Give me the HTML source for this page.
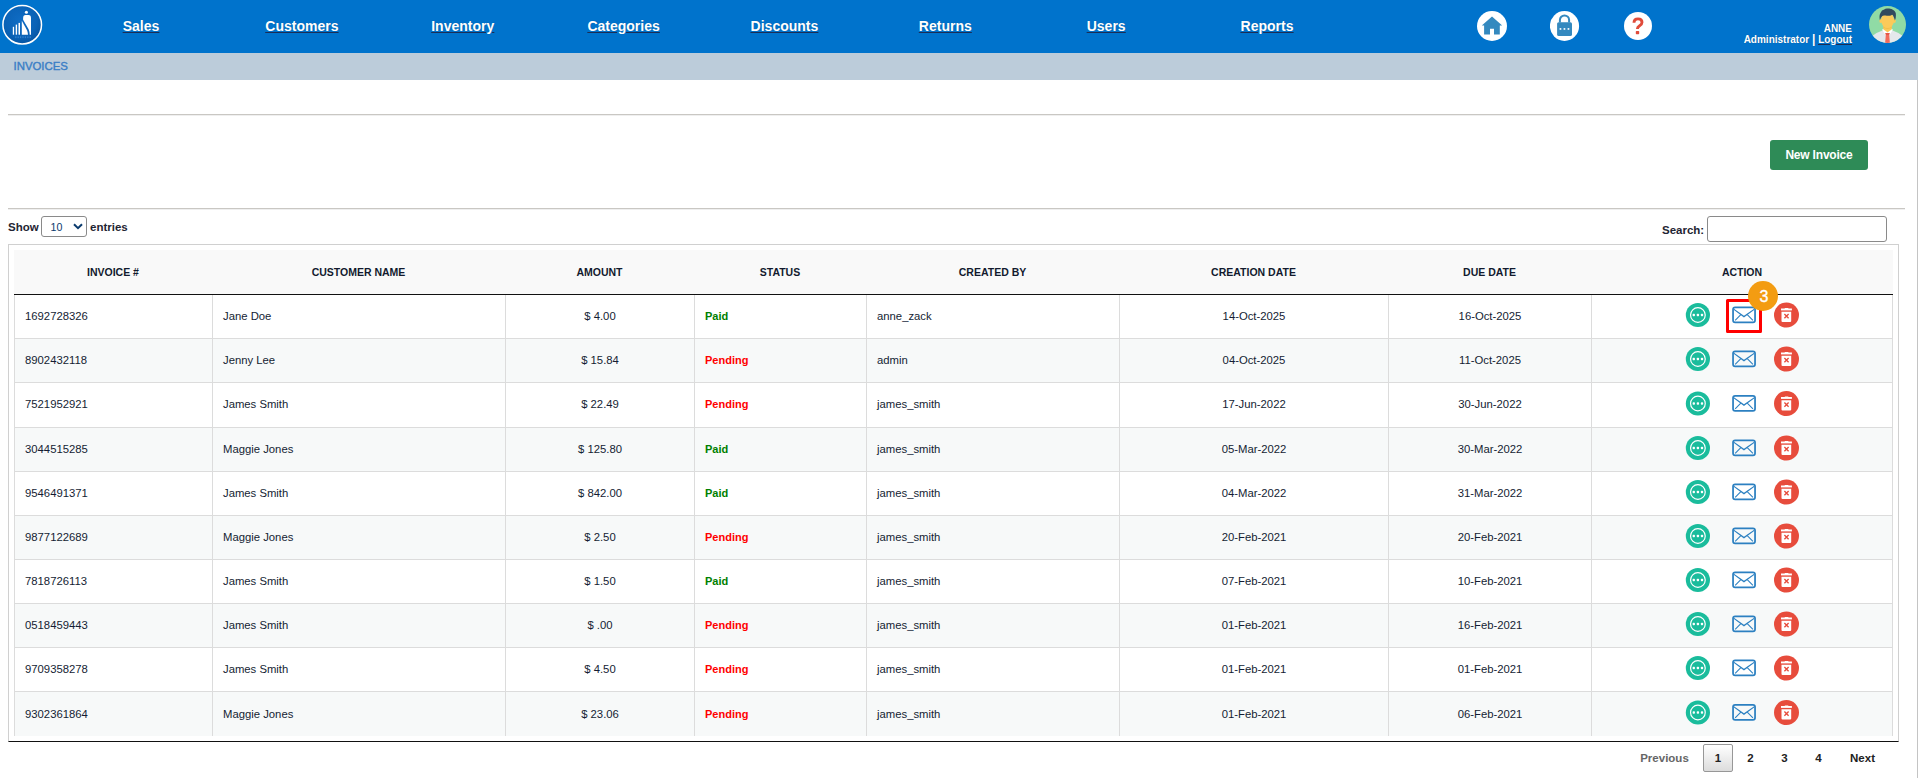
<!DOCTYPE html>
<html><head><meta charset="utf-8">
<style>
*{box-sizing:border-box}
html,body{margin:0;padding:0;background:#fff;width:1918px;height:778px;overflow:hidden;font-family:"Liberation Sans",sans-serif}
.abs{position:absolute}
#nav{position:absolute;left:0;top:0;width:1918px;height:53px;background:#0073CC}
.nv{position:absolute;top:0;height:53px;text-align:center;line-height:53px;color:#fff;font-weight:bold;font-size:14px}
.nv span{text-decoration:underline;text-decoration-color:#1b2d55;text-shadow:0 0 1px rgba(0,0,0,.25)}
#crumb{position:absolute;left:0;top:53px;width:1918px;height:27px;background:#BCCCDA}
#crumb span{position:absolute;left:13.5px;top:6px;font-size:11.4px;line-height:14px;color:#3a7ec6;-webkit-text-stroke:0.4px #3a7ec6;letter-spacing:0px}
.hr{position:absolute;margin:0;left:8px;width:1897px;height:2px;border:0;border-top:1px solid #c9c7c3;border-bottom:1px solid #efefef}
#vline{position:absolute;left:1917px;top:80px;width:1px;height:698px;background:#c4c4c4}
.btn{position:absolute;left:1770px;top:140px;width:98px;height:30px;background:#2E8B57;border-radius:3px;color:#fff;font-weight:bold;font-size:12px;line-height:30px;text-align:center;letter-spacing:-0.2px}
.lbl{position:absolute;font-weight:bold;font-size:11.5px;color:#1f2533;line-height:14px}
#sel{position:absolute;left:41px;top:216px;width:46px;height:21px;border:1px solid #8a8a8a;border-radius:3px;background:#fff}
#srch{position:absolute;left:1707px;top:216px;width:180px;height:26px;border:1px solid #8a8a8a;border-radius:3px;background:#fff}
#wrap{position:absolute;left:8px;top:244px;width:1891px;height:498px;border:1px solid #d0d0d0;border-bottom:1px solid #111}
table{position:absolute;left:14px;top:250px;border-collapse:separate;border-spacing:0;table-layout:fixed;width:1879px}
th{height:45px;background:#f9f9f9;font-size:10.5px;font-weight:bold;color:#121a2e;text-align:center;padding:0 0 1px 0;border-bottom:1px solid #111}
td{font-size:11.3px;color:#141d33;padding:0 10px 2px 10px;border-left:1px solid #dcdcdc;border-top:1px solid #dcdcdc;white-space:nowrap}
tbody tr:first-child td{border-top:0}
td:last-child{border-right:1px solid #dcdcdc}
tr.e td{background:#f7f9f9}
td.c{text-align:center}
.paid{color:#008000;font-weight:bold;font-size:11px}
.pend{color:#ff0000;font-weight:bold;font-size:11px}
.ai{display:inline-block;vertical-align:middle}
.pg{position:absolute;top:744.5px;font-size:11.5px;font-weight:bold;color:#222;line-height:27px;height:27px;text-align:center}
.pg.cur{top:744px;height:27.5px;border:1px solid #979797;border-radius:2px;background:linear-gradient(#fff,#dcdcdc);line-height:26.5px}
.badge{position:absolute;left:1748px;top:281px;width:30px;height:30px;border-radius:50%;background:#f39c12;color:#fff;font-size:16px;font-weight:normal;-webkit-text-stroke:0.35px #fff;text-align:center;line-height:32px;padding-left:2px}
.hl{position:absolute;left:1725.5px;top:298.6px;width:36.4px;height:34px;border:3px solid #ff0000;border-radius:1.5px}
tbody tr:last-child td{padding-bottom:0}

</style></head><body>
<div id="nav">
<div class="nv" style="left:60.60px;width:160.86px"><span>Sales</span></div><div class="nv" style="left:221.46px;width:160.86px"><span>Customers</span></div><div class="nv" style="left:382.32px;width:160.86px"><span>Inventory</span></div><div class="nv" style="left:543.18px;width:160.86px"><span>Categories</span></div><div class="nv" style="left:704.04px;width:160.86px"><span>Discounts</span></div><div class="nv" style="left:864.90px;width:160.86px"><span>Returns</span></div><div class="nv" style="left:1025.76px;width:160.86px"><span>Users</span></div><div class="nv" style="left:1186.62px;width:160.86px"><span>Reports</span></div>
</div>
<svg class="abs" style="left:0;top:0" width="46" height="50" viewBox="0 0 46 50">
<defs><radialGradient id="lg" cx="45%" cy="40%" r="60%"><stop offset="0" stop-color="#0f6cc4"/><stop offset="0.7" stop-color="#0a62b6"/><stop offset="1" stop-color="#0656a4"/></radialGradient></defs>
<circle cx="22.2" cy="24.7" r="19.3" fill="url(#lg)" stroke="#fff" stroke-width="1.5"/>
<circle cx="26.4" cy="12.2" r="1.55" fill="#fff"/>
<path d="M23.1 18.2 Q23.1 15 25.6 15 L28.5 15 Q31 15 31 18.2 L31 34.7 L29.7 34.7 Q29.6 31.5 28.6 29.2 L23.1 19.8 Z" fill="#fff"/>
<path d="M21.8 20.8 L26.9 29.9 Q27.9 32 28 34.7 L21.8 34.7 Z" fill="#fff"/>
<rect x="12.8" y="26.8" width="1.3" height="7.9" fill="#fff"/>
<rect x="15.7" y="24.6" width="1.4" height="10.1" fill="#fff"/>
<rect x="18.5" y="22.9" width="1.5" height="11.8" fill="#fff"/>
<g fill="#2f7fcc"><rect x="15.2" y="36.3" width="1.2" height="1.8"/><rect x="17.6" y="36.3" width="1.2" height="1.8"/><rect x="20" y="36.3" width="1.2" height="1.8"/><rect x="22.4" y="36.3" width="1.2" height="1.8"/><rect x="24.8" y="36.3" width="1.2" height="1.8"/><rect x="27.2" y="36.3" width="1.2" height="1.8"/><rect x="29.6" y="36.3" width="1.2" height="1.8"/></g>
</svg><svg class="abs" style="left:1477px;top:11px" width="30" height="30" viewBox="0 0 30 30">
<circle cx="15" cy="15" r="15" fill="#fff"/>
<path d="M15 5.6 L25.2 14.6 L22.8 14.6 L22.8 23.6 L17 23.6 L17 17.7 L13 17.7 L13 23.6 L7.1 23.6 L7.1 14.6 L4.8 14.6 Z" fill="#3489bf"/>
</svg><svg class="abs" style="left:1550px;top:11px" width="30" height="30" viewBox="0 0 30 30">
<ellipse cx="14.5" cy="15" rx="14.6" ry="15" fill="#fff"/>
<path d="M9.9 11.5 V9 A4.6 4.6 0 0 1 19.1 9 V11.5" fill="none" stroke="#3489bf" stroke-width="2"/>
<rect x="7.1" y="11.2" width="14.9" height="13.8" rx="1.6" fill="#3489bf"/>
<rect x="9.6" y="17.1" width="1.7" height="1.7" fill="#fff"/>
<rect x="13.6" y="17.1" width="1.7" height="1.7" fill="#fff"/>
<rect x="17.6" y="17.1" width="1.7" height="1.7" fill="#fff"/>
</svg><svg class="abs" style="left:1624px;top:12px" width="28" height="28" viewBox="0 0 28 28">
<circle cx="14" cy="14" r="14" fill="#fff"/>
<path d="M10 10.8 Q10 6.85 14 6.85 Q18 6.85 18 10.2 Q18 12.3 15.6 13.7 Q13.4 15 13.4 16.9" fill="none" stroke="#e04b3a" stroke-width="2.9"/>
<rect x="11.8" y="19" width="3.4" height="3.3" rx="0.7" fill="#e04b3a"/>
</svg><svg class="abs" style="left:1869px;top:6px" width="37" height="37" viewBox="0 0 37 37">
<defs><clipPath id="ac"><circle cx="18.5" cy="18.5" r="18.5"/></clipPath></defs>
<circle cx="18.5" cy="18.5" r="18.5" fill="#90dba5"/>
<g clip-path="url(#ac)">
<path d="M1 37 L1 31.5 Q7 26.5 13.5 24.6 L23.5 24.6 Q30 26.5 36 31.5 L36 37 Z" fill="#e5e8ec"/>
<path d="M14.3 18.5 L22.8 18.5 L22.8 24.5 L18.5 26.6 L14.3 24.5 Z" fill="#fbca58"/>
<path d="M14.3 20.5 Q18.5 23 22.8 20.5 L22.8 21.8 Q18.5 24 14.3 21.8 Z" fill="#f3bd4b"/>
<path d="M13 23.6 L14.3 23.2 L18.5 26.6 L16.6 29.2 Z" fill="#fff"/>
<path d="M24 23.6 L22.8 23.2 L18.5 26.6 L20.4 29.2 Z" fill="#fff"/>
<path d="M16.2 27 L20.8 27 L20.2 29 L16.8 29 Z" fill="#e5574a"/>
<path d="M16.8 29 L20.2 29 L20.9 37 L16.1 37 Z" fill="#f26b5b"/>
</g>
<ellipse cx="11.8" cy="15" rx="1.4" ry="1.9" fill="#fbca58"/>
<ellipse cx="25.4" cy="15" rx="1.4" ry="1.9" fill="#fbca58"/>
<ellipse cx="18.6" cy="14.2" rx="6.5" ry="7.8" fill="#fcca5a"/>
<path d="M10.9 14.2 Q9.8 9.5 11.6 6.8 Q12.6 4.2 15.2 3.6 Q16.8 2 19.3 2.6 Q22.3 2.3 24.3 4.1 Q27.2 5.8 26.9 9.2 Q27 12 25.9 14.6 Q25.3 11.6 24.4 10.3 Q23.5 8 22 9.4 Q19.5 10.2 16.5 9.6 Q14.2 9 13.3 10 Q11.8 11.5 10.9 14.2 Z" fill="#324a5e"/>
</svg><div class="abs" style="left:1700px;top:23px;width:152px;text-align:right;color:#fff;font-weight:bold;font-size:10px;line-height:11px;text-shadow:0 0 1px rgba(0,0,0,.3)">ANNE<br>Administrator <span style="font-weight:bold;font-size:12px;position:relative;top:0px">|</span> <span style="text-decoration:underline;text-decoration-color:#1b2d55">Logout</span></div>
<div id="crumb"><span>INVOICES</span></div>
<hr class="hr" style="top:114px">
<hr class="hr" style="top:208px">
<div id="vline"></div>
<div class="btn">New Invoice</div>
<div class="lbl" style="left:8px;top:220px">Show</div>
<div id="sel"><span style="position:absolute;left:8.5px;top:4px;font-size:10.6px;color:#0b3b6e;line-height:13px">10</span></div>
<svg class="abs" style="left:73px;top:223px" width="10" height="7" viewBox="0 0 10 7"><path d="M1 1.2 L5 5.2 L9 1.2" fill="none" stroke="#0b3b6e" stroke-width="2"/></svg>
<div class="lbl" style="left:90px;top:220px">entries</div>
<div class="lbl" style="left:1662px;top:223px">Search:</div>
<div id="srch"></div>
<div id="wrap"></div>
<table><colgroup><col style="width:198px"><col style="width:293px"><col style="width:189px"><col style="width:172px"><col style="width:253px"><col style="width:269px"><col style="width:203px"><col style="width:302px"></colgroup><thead><tr><th>INVOICE #</th><th>CUSTOMER NAME</th><th>AMOUNT</th><th>STATUS</th><th>CREATED BY</th><th>CREATION DATE</th><th>DUE DATE</th><th>ACTION</th></tr></thead><tbody>
<tr style="height:43px"><td>1692728326</td><td>Jane Doe</td><td class="c">$ 4.00</td><td class="paid">Paid</td><td>anne_zack</td><td class="c">14-Oct-2025</td><td class="c">16-Oct-2025</td><td class="c act"></td></tr><tr class="e" style="height:44px"><td>8902432118</td><td>Jenny Lee</td><td class="c">$ 15.84</td><td class="pend">Pending</td><td>admin</td><td class="c">04-Oct-2025</td><td class="c">11-Oct-2025</td><td class="c act"></td></tr><tr style="height:45px"><td>7521952921</td><td>James Smith</td><td class="c">$ 22.49</td><td class="pend">Pending</td><td>james_smith</td><td class="c">17-Jun-2022</td><td class="c">30-Jun-2022</td><td class="c act"></td></tr><tr class="e" style="height:44px"><td>3044515285</td><td>Maggie Jones</td><td class="c">$ 125.80</td><td class="paid">Paid</td><td>james_smith</td><td class="c">05-Mar-2022</td><td class="c">30-Mar-2022</td><td class="c act"></td></tr><tr style="height:44px"><td>9546491371</td><td>James Smith</td><td class="c">$ 842.00</td><td class="paid">Paid</td><td>james_smith</td><td class="c">04-Mar-2022</td><td class="c">31-Mar-2022</td><td class="c act"></td></tr><tr class="e" style="height:44px"><td>9877122689</td><td>Maggie Jones</td><td class="c">$ 2.50</td><td class="pend">Pending</td><td>james_smith</td><td class="c">20-Feb-2021</td><td class="c">20-Feb-2021</td><td class="c act"></td></tr><tr style="height:44px"><td>7818726113</td><td>James Smith</td><td class="c">$ 1.50</td><td class="paid">Paid</td><td>james_smith</td><td class="c">07-Feb-2021</td><td class="c">10-Feb-2021</td><td class="c act"></td></tr><tr class="e" style="height:44px"><td>0518459443</td><td>James Smith</td><td class="c">$ .00</td><td class="pend">Pending</td><td>james_smith</td><td class="c">01-Feb-2021</td><td class="c">16-Feb-2021</td><td class="c act"></td></tr><tr style="height:44px"><td>9709358278</td><td>James Smith</td><td class="c">$ 4.50</td><td class="pend">Pending</td><td>james_smith</td><td class="c">01-Feb-2021</td><td class="c">01-Feb-2021</td><td class="c act"></td></tr><tr class="e" style="height:45px"><td>9302361864</td><td>Maggie Jones</td><td class="c">$ 23.06</td><td class="pend">Pending</td><td>james_smith</td><td class="c">01-Feb-2021</td><td class="c">06-Feb-2021</td><td class="c act"></td></tr>
</tbody></table>
<div class="abs" style="left:1685px;top:302px;width:26px;height:26px"><svg width="26" height="26" viewBox="0 0 26 26" style="display:block"><g transform="translate(0.40,0.50)"><circle cx="12.5" cy="12.5" r="12.1" fill="#1abc9c"/><circle cx="12.5" cy="12.5" r="7.35" fill="none" stroke="#fff" stroke-width="1.2"/><rect x="7.25" y="11.2" width="2.3" height="2.5" rx="0.8" fill="#fff"/><rect x="11.35" y="11.2" width="2.3" height="2.5" rx="0.8" fill="#fff"/><rect x="15.45" y="11.2" width="2.3" height="2.5" rx="0.8" fill="#fff"/></g></svg></div><div class="abs" style="left:1731px;top:305px;width:27px;height:20px"><svg width="27" height="20" viewBox="0 0 27 20" style="display:block"><g transform="translate(0.05,0.50)"><rect x="2" y="1.75" width="22" height="15.2" rx="2.1" fill="none" stroke="#2c80c1" stroke-width="1.75"/><path d="M2.9 3.3 L12.9 10.2 L23.1 3.3 L23.1 4.6 L12.9 12.1 L2.9 4.6 Z" fill="#2c80c1"/><path d="M4.1 14.9 L9.8 9.1 M21.9 14.9 L16.2 9.1" fill="none" stroke="#2c80c1" stroke-width="1.05"/></g></svg></div><div class="abs" style="left:1774px;top:302px;width:26px;height:26px"><svg width="26" height="26" viewBox="0 0 26 26" style="display:block"><g transform="translate(0.00,0.50)"><circle cx="12.5" cy="12.5" r="12.5" fill="#e74c3c"/><rect x="7" y="6" width="10.9" height="1.9" fill="#fff"/><rect x="10.6" y="5.5" width="3.9" height="1" rx="0.5" fill="#fff"/><path d="M7.5 9.2 H17.2 V18.6 Q17.2 19.6 16.2 19.6 H8.5 Q7.5 19.6 7.5 18.6 Z" fill="#fff"/><path d="M10.4 11.6 L14.6 15.8 M14.6 11.6 L10.4 15.8" stroke="#e74c3c" stroke-width="1.35"/></g></svg></div><div class="abs" style="left:1685px;top:346px;width:26px;height:26px"><svg width="26" height="26" viewBox="0 0 26 26" style="display:block"><g transform="translate(0.40,0.50)"><circle cx="12.5" cy="12.5" r="12.1" fill="#1abc9c"/><circle cx="12.5" cy="12.5" r="7.35" fill="none" stroke="#fff" stroke-width="1.2"/><rect x="7.25" y="11.2" width="2.3" height="2.5" rx="0.8" fill="#fff"/><rect x="11.35" y="11.2" width="2.3" height="2.5" rx="0.8" fill="#fff"/><rect x="15.45" y="11.2" width="2.3" height="2.5" rx="0.8" fill="#fff"/></g></svg></div><div class="abs" style="left:1731px;top:349px;width:27px;height:20px"><svg width="27" height="20" viewBox="0 0 27 20" style="display:block"><g transform="translate(0.05,0.50)"><rect x="2" y="1.75" width="22" height="15.2" rx="2.1" fill="none" stroke="#2c80c1" stroke-width="1.75"/><path d="M2.9 3.3 L12.9 10.2 L23.1 3.3 L23.1 4.6 L12.9 12.1 L2.9 4.6 Z" fill="#2c80c1"/><path d="M4.1 14.9 L9.8 9.1 M21.9 14.9 L16.2 9.1" fill="none" stroke="#2c80c1" stroke-width="1.05"/></g></svg></div><div class="abs" style="left:1774px;top:346px;width:26px;height:26px"><svg width="26" height="26" viewBox="0 0 26 26" style="display:block"><g transform="translate(0.00,0.50)"><circle cx="12.5" cy="12.5" r="12.5" fill="#e74c3c"/><rect x="7" y="6" width="10.9" height="1.9" fill="#fff"/><rect x="10.6" y="5.5" width="3.9" height="1" rx="0.5" fill="#fff"/><path d="M7.5 9.2 H17.2 V18.6 Q17.2 19.6 16.2 19.6 H8.5 Q7.5 19.6 7.5 18.6 Z" fill="#fff"/><path d="M10.4 11.6 L14.6 15.8 M14.6 11.6 L10.4 15.8" stroke="#e74c3c" stroke-width="1.35"/></g></svg></div><div class="abs" style="left:1685px;top:391px;width:26px;height:26px"><svg width="26" height="26" viewBox="0 0 26 26" style="display:block"><g transform="translate(0.40,0.00)"><circle cx="12.5" cy="12.5" r="12.1" fill="#1abc9c"/><circle cx="12.5" cy="12.5" r="7.35" fill="none" stroke="#fff" stroke-width="1.2"/><rect x="7.25" y="11.2" width="2.3" height="2.5" rx="0.8" fill="#fff"/><rect x="11.35" y="11.2" width="2.3" height="2.5" rx="0.8" fill="#fff"/><rect x="15.45" y="11.2" width="2.3" height="2.5" rx="0.8" fill="#fff"/></g></svg></div><div class="abs" style="left:1731px;top:394px;width:27px;height:20px"><svg width="27" height="20" viewBox="0 0 27 20" style="display:block"><g transform="translate(0.05,0.00)"><rect x="2" y="1.75" width="22" height="15.2" rx="2.1" fill="none" stroke="#2c80c1" stroke-width="1.75"/><path d="M2.9 3.3 L12.9 10.2 L23.1 3.3 L23.1 4.6 L12.9 12.1 L2.9 4.6 Z" fill="#2c80c1"/><path d="M4.1 14.9 L9.8 9.1 M21.9 14.9 L16.2 9.1" fill="none" stroke="#2c80c1" stroke-width="1.05"/></g></svg></div><div class="abs" style="left:1774px;top:391px;width:26px;height:26px"><svg width="26" height="26" viewBox="0 0 26 26" style="display:block"><g transform="translate(0.00,0.00)"><circle cx="12.5" cy="12.5" r="12.5" fill="#e74c3c"/><rect x="7" y="6" width="10.9" height="1.9" fill="#fff"/><rect x="10.6" y="5.5" width="3.9" height="1" rx="0.5" fill="#fff"/><path d="M7.5 9.2 H17.2 V18.6 Q17.2 19.6 16.2 19.6 H8.5 Q7.5 19.6 7.5 18.6 Z" fill="#fff"/><path d="M10.4 11.6 L14.6 15.8 M14.6 11.6 L10.4 15.8" stroke="#e74c3c" stroke-width="1.35"/></g></svg></div><div class="abs" style="left:1685px;top:435px;width:26px;height:26px"><svg width="26" height="26" viewBox="0 0 26 26" style="display:block"><g transform="translate(0.40,0.50)"><circle cx="12.5" cy="12.5" r="12.1" fill="#1abc9c"/><circle cx="12.5" cy="12.5" r="7.35" fill="none" stroke="#fff" stroke-width="1.2"/><rect x="7.25" y="11.2" width="2.3" height="2.5" rx="0.8" fill="#fff"/><rect x="11.35" y="11.2" width="2.3" height="2.5" rx="0.8" fill="#fff"/><rect x="15.45" y="11.2" width="2.3" height="2.5" rx="0.8" fill="#fff"/></g></svg></div><div class="abs" style="left:1731px;top:438px;width:27px;height:20px"><svg width="27" height="20" viewBox="0 0 27 20" style="display:block"><g transform="translate(0.05,0.50)"><rect x="2" y="1.75" width="22" height="15.2" rx="2.1" fill="none" stroke="#2c80c1" stroke-width="1.75"/><path d="M2.9 3.3 L12.9 10.2 L23.1 3.3 L23.1 4.6 L12.9 12.1 L2.9 4.6 Z" fill="#2c80c1"/><path d="M4.1 14.9 L9.8 9.1 M21.9 14.9 L16.2 9.1" fill="none" stroke="#2c80c1" stroke-width="1.05"/></g></svg></div><div class="abs" style="left:1774px;top:435px;width:26px;height:26px"><svg width="26" height="26" viewBox="0 0 26 26" style="display:block"><g transform="translate(0.00,0.50)"><circle cx="12.5" cy="12.5" r="12.5" fill="#e74c3c"/><rect x="7" y="6" width="10.9" height="1.9" fill="#fff"/><rect x="10.6" y="5.5" width="3.9" height="1" rx="0.5" fill="#fff"/><path d="M7.5 9.2 H17.2 V18.6 Q17.2 19.6 16.2 19.6 H8.5 Q7.5 19.6 7.5 18.6 Z" fill="#fff"/><path d="M10.4 11.6 L14.6 15.8 M14.6 11.6 L10.4 15.8" stroke="#e74c3c" stroke-width="1.35"/></g></svg></div><div class="abs" style="left:1685px;top:479px;width:26px;height:26px"><svg width="26" height="26" viewBox="0 0 26 26" style="display:block"><g transform="translate(0.40,0.50)"><circle cx="12.5" cy="12.5" r="12.1" fill="#1abc9c"/><circle cx="12.5" cy="12.5" r="7.35" fill="none" stroke="#fff" stroke-width="1.2"/><rect x="7.25" y="11.2" width="2.3" height="2.5" rx="0.8" fill="#fff"/><rect x="11.35" y="11.2" width="2.3" height="2.5" rx="0.8" fill="#fff"/><rect x="15.45" y="11.2" width="2.3" height="2.5" rx="0.8" fill="#fff"/></g></svg></div><div class="abs" style="left:1731px;top:482px;width:27px;height:20px"><svg width="27" height="20" viewBox="0 0 27 20" style="display:block"><g transform="translate(0.05,0.50)"><rect x="2" y="1.75" width="22" height="15.2" rx="2.1" fill="none" stroke="#2c80c1" stroke-width="1.75"/><path d="M2.9 3.3 L12.9 10.2 L23.1 3.3 L23.1 4.6 L12.9 12.1 L2.9 4.6 Z" fill="#2c80c1"/><path d="M4.1 14.9 L9.8 9.1 M21.9 14.9 L16.2 9.1" fill="none" stroke="#2c80c1" stroke-width="1.05"/></g></svg></div><div class="abs" style="left:1774px;top:479px;width:26px;height:26px"><svg width="26" height="26" viewBox="0 0 26 26" style="display:block"><g transform="translate(0.00,0.50)"><circle cx="12.5" cy="12.5" r="12.5" fill="#e74c3c"/><rect x="7" y="6" width="10.9" height="1.9" fill="#fff"/><rect x="10.6" y="5.5" width="3.9" height="1" rx="0.5" fill="#fff"/><path d="M7.5 9.2 H17.2 V18.6 Q17.2 19.6 16.2 19.6 H8.5 Q7.5 19.6 7.5 18.6 Z" fill="#fff"/><path d="M10.4 11.6 L14.6 15.8 M14.6 11.6 L10.4 15.8" stroke="#e74c3c" stroke-width="1.35"/></g></svg></div><div class="abs" style="left:1685px;top:523px;width:26px;height:26px"><svg width="26" height="26" viewBox="0 0 26 26" style="display:block"><g transform="translate(0.40,0.50)"><circle cx="12.5" cy="12.5" r="12.1" fill="#1abc9c"/><circle cx="12.5" cy="12.5" r="7.35" fill="none" stroke="#fff" stroke-width="1.2"/><rect x="7.25" y="11.2" width="2.3" height="2.5" rx="0.8" fill="#fff"/><rect x="11.35" y="11.2" width="2.3" height="2.5" rx="0.8" fill="#fff"/><rect x="15.45" y="11.2" width="2.3" height="2.5" rx="0.8" fill="#fff"/></g></svg></div><div class="abs" style="left:1731px;top:526px;width:27px;height:20px"><svg width="27" height="20" viewBox="0 0 27 20" style="display:block"><g transform="translate(0.05,0.50)"><rect x="2" y="1.75" width="22" height="15.2" rx="2.1" fill="none" stroke="#2c80c1" stroke-width="1.75"/><path d="M2.9 3.3 L12.9 10.2 L23.1 3.3 L23.1 4.6 L12.9 12.1 L2.9 4.6 Z" fill="#2c80c1"/><path d="M4.1 14.9 L9.8 9.1 M21.9 14.9 L16.2 9.1" fill="none" stroke="#2c80c1" stroke-width="1.05"/></g></svg></div><div class="abs" style="left:1774px;top:523px;width:26px;height:26px"><svg width="26" height="26" viewBox="0 0 26 26" style="display:block"><g transform="translate(0.00,0.50)"><circle cx="12.5" cy="12.5" r="12.5" fill="#e74c3c"/><rect x="7" y="6" width="10.9" height="1.9" fill="#fff"/><rect x="10.6" y="5.5" width="3.9" height="1" rx="0.5" fill="#fff"/><path d="M7.5 9.2 H17.2 V18.6 Q17.2 19.6 16.2 19.6 H8.5 Q7.5 19.6 7.5 18.6 Z" fill="#fff"/><path d="M10.4 11.6 L14.6 15.8 M14.6 11.6 L10.4 15.8" stroke="#e74c3c" stroke-width="1.35"/></g></svg></div><div class="abs" style="left:1685px;top:567px;width:26px;height:26px"><svg width="26" height="26" viewBox="0 0 26 26" style="display:block"><g transform="translate(0.40,0.50)"><circle cx="12.5" cy="12.5" r="12.1" fill="#1abc9c"/><circle cx="12.5" cy="12.5" r="7.35" fill="none" stroke="#fff" stroke-width="1.2"/><rect x="7.25" y="11.2" width="2.3" height="2.5" rx="0.8" fill="#fff"/><rect x="11.35" y="11.2" width="2.3" height="2.5" rx="0.8" fill="#fff"/><rect x="15.45" y="11.2" width="2.3" height="2.5" rx="0.8" fill="#fff"/></g></svg></div><div class="abs" style="left:1731px;top:570px;width:27px;height:20px"><svg width="27" height="20" viewBox="0 0 27 20" style="display:block"><g transform="translate(0.05,0.50)"><rect x="2" y="1.75" width="22" height="15.2" rx="2.1" fill="none" stroke="#2c80c1" stroke-width="1.75"/><path d="M2.9 3.3 L12.9 10.2 L23.1 3.3 L23.1 4.6 L12.9 12.1 L2.9 4.6 Z" fill="#2c80c1"/><path d="M4.1 14.9 L9.8 9.1 M21.9 14.9 L16.2 9.1" fill="none" stroke="#2c80c1" stroke-width="1.05"/></g></svg></div><div class="abs" style="left:1774px;top:567px;width:26px;height:26px"><svg width="26" height="26" viewBox="0 0 26 26" style="display:block"><g transform="translate(0.00,0.50)"><circle cx="12.5" cy="12.5" r="12.5" fill="#e74c3c"/><rect x="7" y="6" width="10.9" height="1.9" fill="#fff"/><rect x="10.6" y="5.5" width="3.9" height="1" rx="0.5" fill="#fff"/><path d="M7.5 9.2 H17.2 V18.6 Q17.2 19.6 16.2 19.6 H8.5 Q7.5 19.6 7.5 18.6 Z" fill="#fff"/><path d="M10.4 11.6 L14.6 15.8 M14.6 11.6 L10.4 15.8" stroke="#e74c3c" stroke-width="1.35"/></g></svg></div><div class="abs" style="left:1685px;top:611px;width:26px;height:26px"><svg width="26" height="26" viewBox="0 0 26 26" style="display:block"><g transform="translate(0.40,0.50)"><circle cx="12.5" cy="12.5" r="12.1" fill="#1abc9c"/><circle cx="12.5" cy="12.5" r="7.35" fill="none" stroke="#fff" stroke-width="1.2"/><rect x="7.25" y="11.2" width="2.3" height="2.5" rx="0.8" fill="#fff"/><rect x="11.35" y="11.2" width="2.3" height="2.5" rx="0.8" fill="#fff"/><rect x="15.45" y="11.2" width="2.3" height="2.5" rx="0.8" fill="#fff"/></g></svg></div><div class="abs" style="left:1731px;top:614px;width:27px;height:20px"><svg width="27" height="20" viewBox="0 0 27 20" style="display:block"><g transform="translate(0.05,0.50)"><rect x="2" y="1.75" width="22" height="15.2" rx="2.1" fill="none" stroke="#2c80c1" stroke-width="1.75"/><path d="M2.9 3.3 L12.9 10.2 L23.1 3.3 L23.1 4.6 L12.9 12.1 L2.9 4.6 Z" fill="#2c80c1"/><path d="M4.1 14.9 L9.8 9.1 M21.9 14.9 L16.2 9.1" fill="none" stroke="#2c80c1" stroke-width="1.05"/></g></svg></div><div class="abs" style="left:1774px;top:611px;width:26px;height:26px"><svg width="26" height="26" viewBox="0 0 26 26" style="display:block"><g transform="translate(0.00,0.50)"><circle cx="12.5" cy="12.5" r="12.5" fill="#e74c3c"/><rect x="7" y="6" width="10.9" height="1.9" fill="#fff"/><rect x="10.6" y="5.5" width="3.9" height="1" rx="0.5" fill="#fff"/><path d="M7.5 9.2 H17.2 V18.6 Q17.2 19.6 16.2 19.6 H8.5 Q7.5 19.6 7.5 18.6 Z" fill="#fff"/><path d="M10.4 11.6 L14.6 15.8 M14.6 11.6 L10.4 15.8" stroke="#e74c3c" stroke-width="1.35"/></g></svg></div><div class="abs" style="left:1685px;top:655px;width:26px;height:26px"><svg width="26" height="26" viewBox="0 0 26 26" style="display:block"><g transform="translate(0.40,0.50)"><circle cx="12.5" cy="12.5" r="12.1" fill="#1abc9c"/><circle cx="12.5" cy="12.5" r="7.35" fill="none" stroke="#fff" stroke-width="1.2"/><rect x="7.25" y="11.2" width="2.3" height="2.5" rx="0.8" fill="#fff"/><rect x="11.35" y="11.2" width="2.3" height="2.5" rx="0.8" fill="#fff"/><rect x="15.45" y="11.2" width="2.3" height="2.5" rx="0.8" fill="#fff"/></g></svg></div><div class="abs" style="left:1731px;top:658px;width:27px;height:20px"><svg width="27" height="20" viewBox="0 0 27 20" style="display:block"><g transform="translate(0.05,0.50)"><rect x="2" y="1.75" width="22" height="15.2" rx="2.1" fill="none" stroke="#2c80c1" stroke-width="1.75"/><path d="M2.9 3.3 L12.9 10.2 L23.1 3.3 L23.1 4.6 L12.9 12.1 L2.9 4.6 Z" fill="#2c80c1"/><path d="M4.1 14.9 L9.8 9.1 M21.9 14.9 L16.2 9.1" fill="none" stroke="#2c80c1" stroke-width="1.05"/></g></svg></div><div class="abs" style="left:1774px;top:655px;width:26px;height:26px"><svg width="26" height="26" viewBox="0 0 26 26" style="display:block"><g transform="translate(0.00,0.50)"><circle cx="12.5" cy="12.5" r="12.5" fill="#e74c3c"/><rect x="7" y="6" width="10.9" height="1.9" fill="#fff"/><rect x="10.6" y="5.5" width="3.9" height="1" rx="0.5" fill="#fff"/><path d="M7.5 9.2 H17.2 V18.6 Q17.2 19.6 16.2 19.6 H8.5 Q7.5 19.6 7.5 18.6 Z" fill="#fff"/><path d="M10.4 11.6 L14.6 15.8 M14.6 11.6 L10.4 15.8" stroke="#e74c3c" stroke-width="1.35"/></g></svg></div><div class="abs" style="left:1685px;top:700px;width:26px;height:26px"><svg width="26" height="26" viewBox="0 0 26 26" style="display:block"><g transform="translate(0.40,0.00)"><circle cx="12.5" cy="12.5" r="12.1" fill="#1abc9c"/><circle cx="12.5" cy="12.5" r="7.35" fill="none" stroke="#fff" stroke-width="1.2"/><rect x="7.25" y="11.2" width="2.3" height="2.5" rx="0.8" fill="#fff"/><rect x="11.35" y="11.2" width="2.3" height="2.5" rx="0.8" fill="#fff"/><rect x="15.45" y="11.2" width="2.3" height="2.5" rx="0.8" fill="#fff"/></g></svg></div><div class="abs" style="left:1731px;top:703px;width:27px;height:20px"><svg width="27" height="20" viewBox="0 0 27 20" style="display:block"><g transform="translate(0.05,0.00)"><rect x="2" y="1.75" width="22" height="15.2" rx="2.1" fill="none" stroke="#2c80c1" stroke-width="1.75"/><path d="M2.9 3.3 L12.9 10.2 L23.1 3.3 L23.1 4.6 L12.9 12.1 L2.9 4.6 Z" fill="#2c80c1"/><path d="M4.1 14.9 L9.8 9.1 M21.9 14.9 L16.2 9.1" fill="none" stroke="#2c80c1" stroke-width="1.05"/></g></svg></div><div class="abs" style="left:1774px;top:700px;width:26px;height:26px"><svg width="26" height="26" viewBox="0 0 26 26" style="display:block"><g transform="translate(0.00,0.00)"><circle cx="12.5" cy="12.5" r="12.5" fill="#e74c3c"/><rect x="7" y="6" width="10.9" height="1.9" fill="#fff"/><rect x="10.6" y="5.5" width="3.9" height="1" rx="0.5" fill="#fff"/><path d="M7.5 9.2 H17.2 V18.6 Q17.2 19.6 16.2 19.6 H8.5 Q7.5 19.6 7.5 18.6 Z" fill="#fff"/><path d="M10.4 11.6 L14.6 15.8 M14.6 11.6 L10.4 15.8" stroke="#e74c3c" stroke-width="1.35"/></g></svg></div>
<div class="hl"></div>
<div class="badge">3</div>
<div class="pg" style="left:1629px;width:71px;color:#666">Previous</div>
<div class="pg cur" style="left:1703px;width:30px">1</div>
<div class="pg" style="left:1735px;width:31px">2</div>
<div class="pg" style="left:1769px;width:31px">3</div>
<div class="pg" style="left:1803px;width:31px">4</div>
<div class="pg" style="left:1838px;width:49px">Next</div>
</body></html>
